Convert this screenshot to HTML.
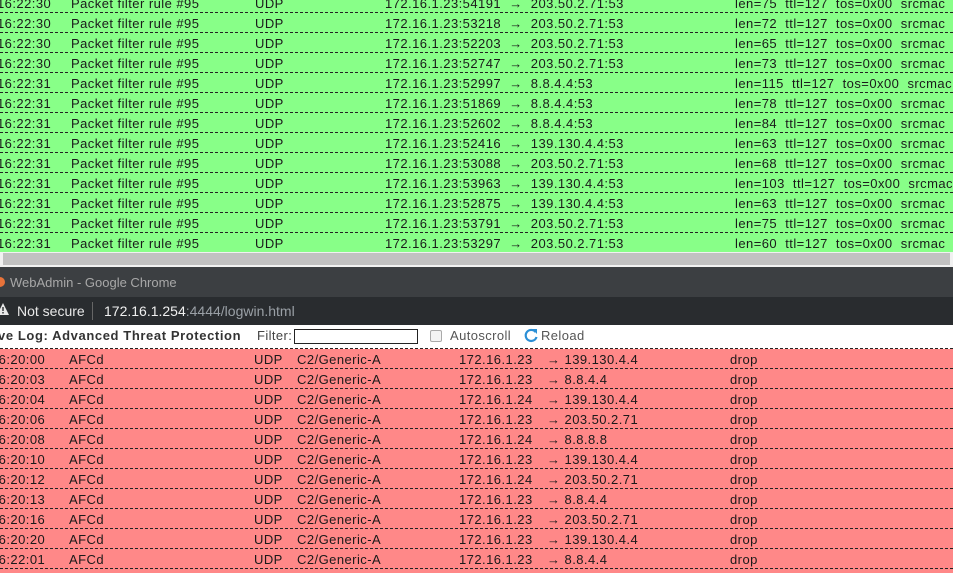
<!DOCTYPE html>
<html><head><meta charset="utf-8"><style>
*{margin:0;padding:0;box-sizing:border-box}
html,body{width:953px;height:573px;overflow:hidden}
body{position:relative;background:#fff;font-family:"Liberation Sans","DejaVu Sans",sans-serif;font-size:13px;color:#1a1a1a}
.g,.r{position:absolute;left:0;width:953px;height:20px;border-bottom:1px dashed #222;white-space:nowrap;letter-spacing:0.45px}
.g{background:#88ff88}.r{background:#ff8888}
.g span,.r span{position:absolute;top:3px}
.t{left:-3px}.m{left:71px}.u{left:255px}.s{left:385px}.l{left:735px}
.rt{left:-9px}.ra{left:69px}.ru{left:254px}.rc{left:297px}.ri{left:459px}.rr{left:547px}.rd{left:730px}
</style></head><body>
<div class="g" style="top:-7px"><span class="t">16:22:30</span><span class="m">Packet filter rule #95</span><span class="u">UDP</span><span class="s">172.16.1.23:54191 &nbsp;→&nbsp; 203.50.2.71:53</span><span class="l">len=75&nbsp; ttl=127&nbsp; tos=0x00&nbsp; srcmac</span></div>
<div class="g" style="top:13px"><span class="t">16:22:30</span><span class="m">Packet filter rule #95</span><span class="u">UDP</span><span class="s">172.16.1.23:53218 &nbsp;→&nbsp; 203.50.2.71:53</span><span class="l">len=72&nbsp; ttl=127&nbsp; tos=0x00&nbsp; srcmac</span></div>
<div class="g" style="top:33px"><span class="t">16:22:30</span><span class="m">Packet filter rule #95</span><span class="u">UDP</span><span class="s">172.16.1.23:52203 &nbsp;→&nbsp; 203.50.2.71:53</span><span class="l">len=65&nbsp; ttl=127&nbsp; tos=0x00&nbsp; srcmac</span></div>
<div class="g" style="top:53px"><span class="t">16:22:30</span><span class="m">Packet filter rule #95</span><span class="u">UDP</span><span class="s">172.16.1.23:52747 &nbsp;→&nbsp; 203.50.2.71:53</span><span class="l">len=73&nbsp; ttl=127&nbsp; tos=0x00&nbsp; srcmac</span></div>
<div class="g" style="top:73px"><span class="t">16:22:31</span><span class="m">Packet filter rule #95</span><span class="u">UDP</span><span class="s">172.16.1.23:52997 &nbsp;→&nbsp; 8.8.4.4:53</span><span class="l">len=115&nbsp; ttl=127&nbsp; tos=0x00&nbsp; srcmac</span></div>
<div class="g" style="top:93px"><span class="t">16:22:31</span><span class="m">Packet filter rule #95</span><span class="u">UDP</span><span class="s">172.16.1.23:51869 &nbsp;→&nbsp; 8.8.4.4:53</span><span class="l">len=78&nbsp; ttl=127&nbsp; tos=0x00&nbsp; srcmac</span></div>
<div class="g" style="top:113px"><span class="t">16:22:31</span><span class="m">Packet filter rule #95</span><span class="u">UDP</span><span class="s">172.16.1.23:52602 &nbsp;→&nbsp; 8.8.4.4:53</span><span class="l">len=84&nbsp; ttl=127&nbsp; tos=0x00&nbsp; srcmac</span></div>
<div class="g" style="top:133px"><span class="t">16:22:31</span><span class="m">Packet filter rule #95</span><span class="u">UDP</span><span class="s">172.16.1.23:52416 &nbsp;→&nbsp; 139.130.4.4:53</span><span class="l">len=63&nbsp; ttl=127&nbsp; tos=0x00&nbsp; srcmac</span></div>
<div class="g" style="top:153px"><span class="t">16:22:31</span><span class="m">Packet filter rule #95</span><span class="u">UDP</span><span class="s">172.16.1.23:53088 &nbsp;→&nbsp; 203.50.2.71:53</span><span class="l">len=68&nbsp; ttl=127&nbsp; tos=0x00&nbsp; srcmac</span></div>
<div class="g" style="top:173px"><span class="t">16:22:31</span><span class="m">Packet filter rule #95</span><span class="u">UDP</span><span class="s">172.16.1.23:53963 &nbsp;→&nbsp; 139.130.4.4:53</span><span class="l">len=103&nbsp; ttl=127&nbsp; tos=0x00&nbsp; srcmac</span></div>
<div class="g" style="top:193px"><span class="t">16:22:31</span><span class="m">Packet filter rule #95</span><span class="u">UDP</span><span class="s">172.16.1.23:52875 &nbsp;→&nbsp; 139.130.4.4:53</span><span class="l">len=63&nbsp; ttl=127&nbsp; tos=0x00&nbsp; srcmac</span></div>
<div class="g" style="top:213px"><span class="t">16:22:31</span><span class="m">Packet filter rule #95</span><span class="u">UDP</span><span class="s">172.16.1.23:53791 &nbsp;→&nbsp; 203.50.2.71:53</span><span class="l">len=75&nbsp; ttl=127&nbsp; tos=0x00&nbsp; srcmac</span></div>
<div class="g" style="top:233px;height:19px;border:none"><span class="t">16:22:31</span><span class="m">Packet filter rule #95</span><span class="u">UDP</span><span class="s">172.16.1.23:53297 &nbsp;→&nbsp; 203.50.2.71:53</span><span class="l">len=60&nbsp; ttl=127&nbsp; tos=0x00&nbsp; srcmac</span></div>
<div style="position:absolute;top:252px;left:0;width:953px;height:16px;background:#f1f1f1"></div>
<div style="position:absolute;top:253px;left:3px;width:947px;height:12px;background:#c1c1c1"></div>
<div style="position:absolute;top:267px;left:0;width:953px;height:30px;background:#3c3f42"></div>
<div style="position:absolute;top:277px;left:-5px;width:10px;height:10px;border-radius:50%;background:#e8733a"></div>
<div style="position:absolute;top:275px;left:10px;color:#a8a8a8;font-size:13px">WebAdmin - Google Chrome</div>
<div style="position:absolute;top:297px;left:0;width:953px;height:28px;background:#292c2f"></div>
<svg style="position:absolute;top:303px;left:-3px" width="12" height="12"><path d="M6 0L12 12H0Z" fill="#e8e8e8"/><rect x="5.3" y="4" width="1.4" height="4" fill="#292c2f"/><rect x="5.3" y="9" width="1.4" height="1.5" fill="#292c2f"/></svg>
<div style="position:absolute;top:303px;left:17px;color:#e8e8e8;font-size:14px">Not secure</div>
<div style="position:absolute;top:302px;left:92px;width:1px;height:18px;background:#666"></div>
<div style="position:absolute;top:303px;left:104px;color:#f0f0f0;font-size:14px">172.16.1.254<span style="color:#9aa0a6">:4444/logwin.html</span></div>
<div style="position:absolute;top:328px;left:-2px;font-weight:bold;color:#333;font-size:13px;letter-spacing:0.6px">ve Log: Advanced Threat Protection</div>
<div style="position:absolute;top:328px;left:257px;color:#444;letter-spacing:0.4px">Filter:</div>
<div style="position:absolute;top:329px;left:294px;width:124px;height:15px;border:1px solid #222;background:#fff"></div>
<div style="position:absolute;top:330px;left:430px;width:12px;height:12px;border:1px solid #aaa;border-radius:2px;background:#f4f4f4"></div>
<div style="position:absolute;top:328px;left:450px;color:#555;letter-spacing:0.4px">Autoscroll</div>
<svg style="position:absolute;top:328px;left:524px" width="15" height="15"><path d="M11.5 4A5.5 5.5 0 1 0 12.5 9" fill="none" stroke="#2b8fd6" stroke-width="2.2"/><path d="M8 1L13 1L13 6Z" fill="#2b8fd6"/></svg>
<div style="position:absolute;top:328px;left:541px;color:#555;letter-spacing:0.4px">Reload</div>
<div style="position:absolute;top:348px;left:0;width:953px;border-top:1px dashed #222"></div>
<div class="r" style="top:349px"><span class="rt">16:20:00</span><span class="ra">AFCd</span><span class="ru">UDP</span><span class="rc">C2/Generic-A</span><span class="ri">172.16.1.23</span><span class="rr">→ 139.130.4.4</span><span class="rd">drop</span></div>
<div class="r" style="top:369px"><span class="rt">16:20:03</span><span class="ra">AFCd</span><span class="ru">UDP</span><span class="rc">C2/Generic-A</span><span class="ri">172.16.1.23</span><span class="rr">→ 8.8.4.4</span><span class="rd">drop</span></div>
<div class="r" style="top:389px"><span class="rt">16:20:04</span><span class="ra">AFCd</span><span class="ru">UDP</span><span class="rc">C2/Generic-A</span><span class="ri">172.16.1.24</span><span class="rr">→ 139.130.4.4</span><span class="rd">drop</span></div>
<div class="r" style="top:409px"><span class="rt">16:20:06</span><span class="ra">AFCd</span><span class="ru">UDP</span><span class="rc">C2/Generic-A</span><span class="ri">172.16.1.23</span><span class="rr">→ 203.50.2.71</span><span class="rd">drop</span></div>
<div class="r" style="top:429px"><span class="rt">16:20:08</span><span class="ra">AFCd</span><span class="ru">UDP</span><span class="rc">C2/Generic-A</span><span class="ri">172.16.1.24</span><span class="rr">→ 8.8.8.8</span><span class="rd">drop</span></div>
<div class="r" style="top:449px"><span class="rt">16:20:10</span><span class="ra">AFCd</span><span class="ru">UDP</span><span class="rc">C2/Generic-A</span><span class="ri">172.16.1.23</span><span class="rr">→ 139.130.4.4</span><span class="rd">drop</span></div>
<div class="r" style="top:469px"><span class="rt">16:20:12</span><span class="ra">AFCd</span><span class="ru">UDP</span><span class="rc">C2/Generic-A</span><span class="ri">172.16.1.24</span><span class="rr">→ 203.50.2.71</span><span class="rd">drop</span></div>
<div class="r" style="top:489px"><span class="rt">16:20:13</span><span class="ra">AFCd</span><span class="ru">UDP</span><span class="rc">C2/Generic-A</span><span class="ri">172.16.1.23</span><span class="rr">→ 8.8.4.4</span><span class="rd">drop</span></div>
<div class="r" style="top:509px"><span class="rt">16:20:16</span><span class="ra">AFCd</span><span class="ru">UDP</span><span class="rc">C2/Generic-A</span><span class="ri">172.16.1.23</span><span class="rr">→ 203.50.2.71</span><span class="rd">drop</span></div>
<div class="r" style="top:529px"><span class="rt">16:20:20</span><span class="ra">AFCd</span><span class="ru">UDP</span><span class="rc">C2/Generic-A</span><span class="ri">172.16.1.23</span><span class="rr">→ 139.130.4.4</span><span class="rd">drop</span></div>
<div class="r" style="top:549px"><span class="rt">16:22:01</span><span class="ra">AFCd</span><span class="ru">UDP</span><span class="rc">C2/Generic-A</span><span class="ri">172.16.1.23</span><span class="rr">→ 8.8.4.4</span><span class="rd">drop</span></div>
<div class="r" style="top:569px;height:4px;border:none"></div>
</body></html>
